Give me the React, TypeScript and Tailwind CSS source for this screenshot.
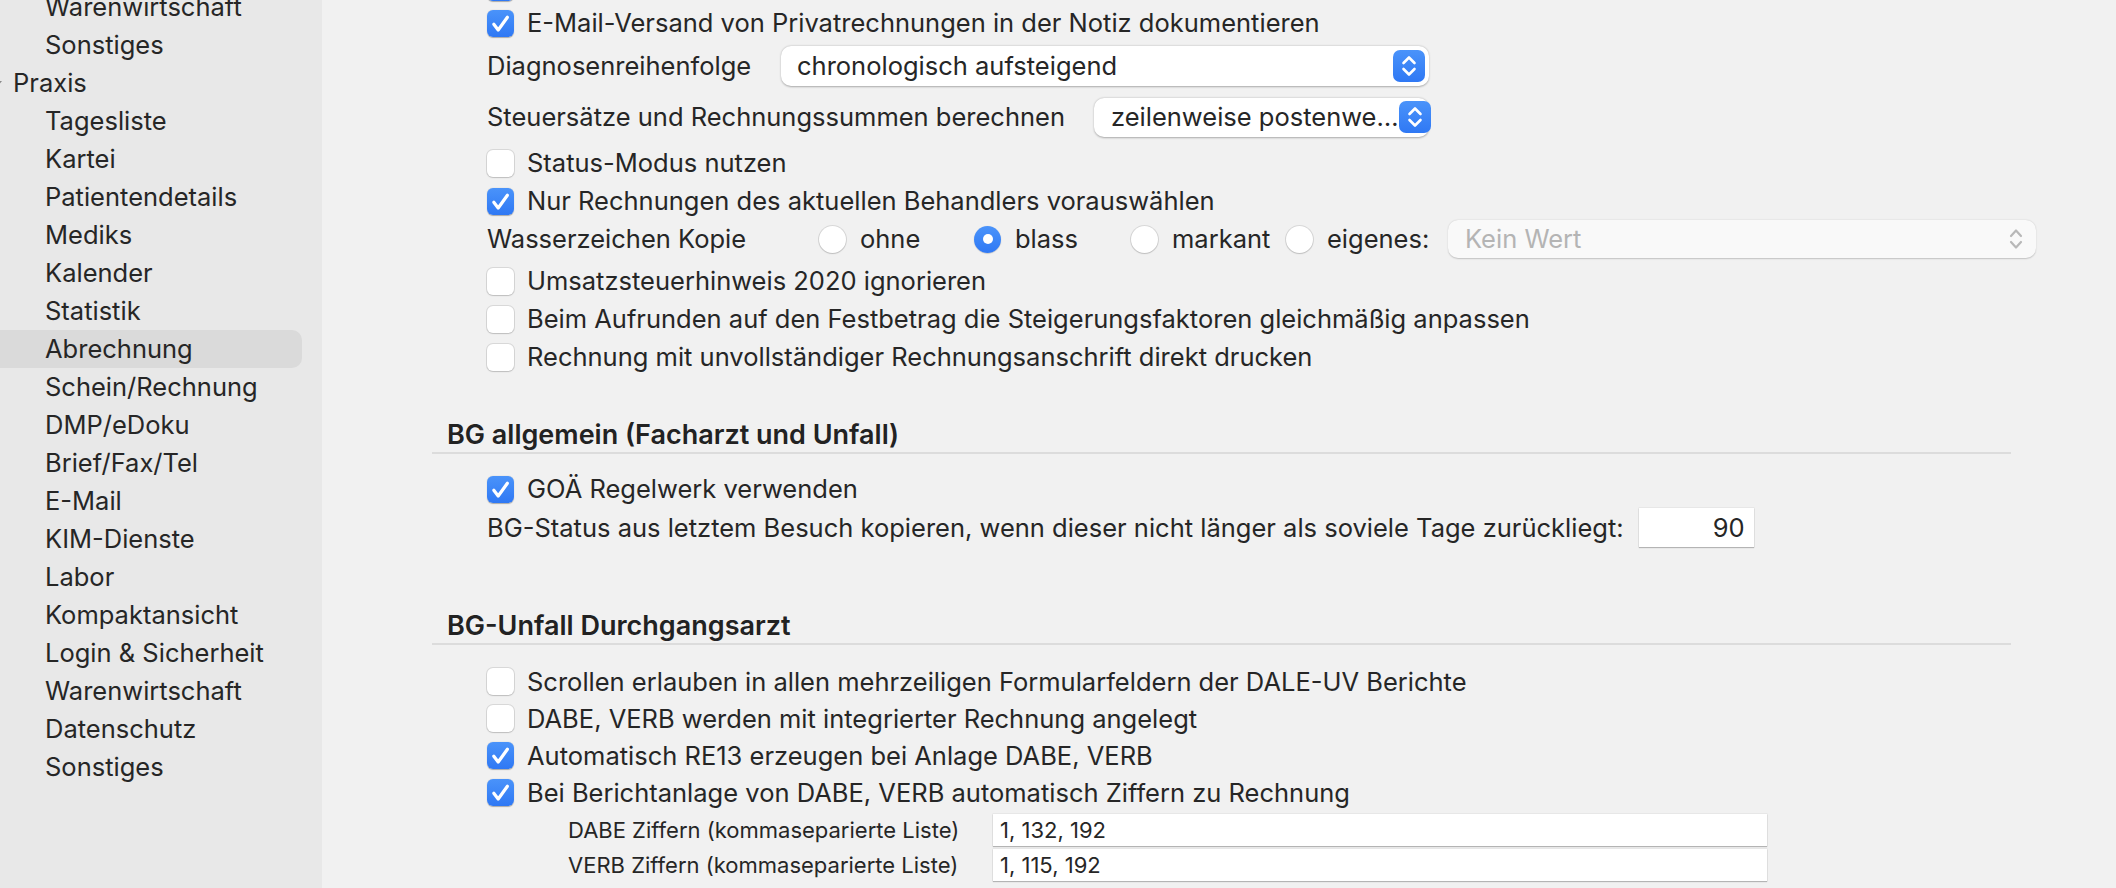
import React from "react";

function Checkbox({ checked }: { checked: boolean }) {
  if (checked) {
    return (
      <div className="w-[27px] h-[27px] rounded-[6px] bg-linear-to-b from-[#4a93fa] to-[#2f78f4] flex items-center justify-center shrink-0 shadow-[0_0.5px_1px_rgba(0,0,0,0.3)]">
        <svg width="27" height="27" viewBox="0 0 27 27">
          <path d="M6.8 14.2 L11.2 20 L20.4 7.2" fill="none" stroke="white" strokeWidth="3.2" strokeLinecap="round" strokeLinejoin="round" />
        </svg>
      </div>
    );
  }
  return <div className="w-[27px] h-[27px] rounded-[6px] bg-white shrink-0 shadow-[0_0_0_1px_rgba(0,0,0,0.1),0_1px_1.5px_rgba(0,0,0,0.12)]" />;
}

function Radio({ checked }: { checked: boolean }) {
  if (checked) {
    return (
      <div className="w-[27px] h-[27px] rounded-full bg-linear-to-b from-[#4a93fa] to-[#2f78f4] flex items-center justify-center shrink-0 shadow-[0_0.5px_1px_rgba(0,0,0,0.3)]">
        <div className="w-[10px] h-[10px] rounded-full bg-white" />
      </div>
    );
  }
  return <div className="w-[27px] h-[27px] rounded-full bg-white shrink-0 shadow-[0_0_0_1px_rgba(0,0,0,0.1),0_1px_1.5px_rgba(0,0,0,0.12)]" />;
}

function Stepper({ disabled }: { disabled?: boolean }) {
  if (disabled) {
    return (
      <div className="w-[32px] h-[32px] flex items-center justify-center shrink-0">
        <svg width="32" height="32" viewBox="0 0 32 32">
          <path d="M11 13 L16 7.5 L21 13" fill="none" stroke="#b8b8b8" strokeWidth="2.2" strokeLinecap="round" strokeLinejoin="round" />
          <path d="M11 19 L16 24.5 L21 19" fill="none" stroke="#b8b8b8" strokeWidth="2.2" strokeLinecap="round" strokeLinejoin="round" />
        </svg>
      </div>
    );
  }
  return (
    <div className="w-[32px] h-[32px] rounded-[7px] bg-linear-to-b from-[#4a93fa] to-[#2f78f4] flex items-center justify-center shrink-0">
      <svg width="32" height="32" viewBox="0 0 32 32">
        <path d="M10.5 13 L16 7.5 L21.5 13" fill="none" stroke="white" strokeWidth="2.6" strokeLinecap="round" strokeLinejoin="round" />
        <path d="M10.5 19 L16 24.5 L21.5 19" fill="none" stroke="white" strokeWidth="2.6" strokeLinecap="round" strokeLinejoin="round" />
      </svg>
    </div>
  );
}

function CheckRow({ checked, label }: { checked: boolean; label: string }) {
  return (
    <div className="flex items-center h-[38px] pl-[55px] gap-[13px] shrink-0">
      <Checkbox checked={checked} />
      <span className="whitespace-nowrap">{label}</span>
    </div>
  );
}

function CheckRow37({ checked, label }: { checked: boolean; label: string }) {
  return (
    <div className="flex items-center h-[37px] pl-[55px] gap-[13px] shrink-0">
      <Checkbox checked={checked} />
      <span className="whitespace-nowrap">{label}</span>
    </div>
  );
}

const sidebarItems: { label: string; level: number; selected?: boolean }[] = [
  { label: "Warenwirtschaft", level: 1 },
  { label: "Sonstiges", level: 1 },
  { label: "Praxis", level: 0 },
  { label: "Tagesliste", level: 1 },
  { label: "Kartei", level: 1 },
  { label: "Patientendetails", level: 1 },
  { label: "Mediks", level: 1 },
  { label: "Kalender", level: 1 },
  { label: "Statistik", level: 1 },
  { label: "Abrechnung", level: 1, selected: true },
  { label: "Schein/Rechnung", level: 1 },
  { label: "DMP/eDoku", level: 1 },
  { label: "Brief/Fax/Tel", level: 1 },
  { label: "E-Mail", level: 1 },
  { label: "KIM-Dienste", level: 1 },
  { label: "Labor", level: 1 },
  { label: "Kompaktansicht", level: 1 },
  { label: "Login & Sicherheit", level: 1 },
  { label: "Warenwirtschaft", level: 1 },
  { label: "Datenschutz", level: 1 },
  { label: "Sonstiges", level: 1 },
];

function Sidebar() {
  return (
    <div className="w-[322px] h-full bg-[#e8e8e8] shrink-0 overflow-hidden">
      <div className="flex flex-col -mt-[12px]">
        {sidebarItems.map((it, i) => {
          if (it.level === 0) {
            return (
              <div key={i} className="h-[38px] flex items-center w-[302px]">
                <svg width="10" height="10" viewBox="0 0 10 10" className="-ml-[7px] shrink-0">
                  <path d="M1 3 L9 3 L5 8 Z" fill="#8a8a8a" />
                </svg>
                <span className="ml-[10px]">{it.label}</span>
              </div>
            );
          }
          return (
            <div
              key={i}
              className={
                it.selected
                  ? "h-[38px] flex items-center w-[302px] pl-[45px] bg-[#dadada] rounded-r-[10px]"
                  : "h-[38px] flex items-center w-[302px] pl-[45px]"
              }
            >
              {it.label}
            </div>
          );
        })}
      </div>
    </div>
  );
}

function SectionHeader({ title }: { title: string }) {
  return (
    <div className="flex flex-col shrink-0">
      <div className="h-[36px] flex items-center pl-[15px] font-semibold text-[27px] text-[#222222]">{title}</div>
      <div className="h-[2px] bg-[#dcdcdc]" />
    </div>
  );
}

function Main() {
  return (
    <div className="flex-1 h-full bg-[#f1f1f1] overflow-hidden">
      <div className="ml-[110px] w-[1579px] flex flex-col -mt-[29px]">
        <div className="h-[33px] flex items-center pl-[55px] shrink-0">
          <Checkbox checked={true} />
        </div>
        <CheckRow checked={true} label="E-Mail-Versand von Privatrechnungen in der Notiz dokumentieren" />
        <div className="h-[48px] flex items-center pl-[55px] shrink-0">
          <span className="w-[294px] shrink-0 whitespace-nowrap">Diagnosenreihenfolge</span>
          <div className="w-[648px] h-[40px] shrink-0 rounded-[10px] bg-white shadow-[0_0.5px_2px_rgba(0,0,0,0.3)] flex items-center justify-between pl-[16px] pr-[4px]">
            <span className="whitespace-nowrap">chronologisch aufsteigend</span>
            <Stepper />
          </div>
        </div>
        <div className="h-[54px] flex items-center pl-[55px] shrink-0">
          <span className="w-[607px] shrink-0 whitespace-nowrap">Steuersätze und Rechnungssummen berechnen</span>
          <div className="w-[335px] h-[39px] shrink-0 rounded-[10px] bg-white shadow-[0_0.5px_2px_rgba(0,0,0,0.3)] flex items-center justify-between pl-[17px] pr-[4px]">
            <span className="whitespace-nowrap">zeilenweise postenwe…</span>
            <Stepper />
          </div>
        </div>
        <CheckRow checked={false} label="Status-Modus nutzen" />
        <CheckRow checked={true} label="Nur Rechnungen des aktuellen Behandlers vorauswählen" />
        <div className="h-[42px] shrink-0 pl-[55px]">
          <div className="h-[38px] flex items-center">
            <span className="w-[332px] shrink-0 whitespace-nowrap">Wasserzeichen Kopie</span>
            <div className="w-[155px] shrink-0 flex items-center gap-[14px]">
              <Radio checked={false} />
              <span>ohne</span>
            </div>
            <div className="w-[157px] shrink-0 flex items-center gap-[14px]">
              <Radio checked={true} />
              <span>blass</span>
            </div>
            <div className="w-[155px] shrink-0 flex items-center gap-[14px]">
              <Radio checked={false} />
              <span>markant</span>
            </div>
            <div className="w-[162px] shrink-0 flex items-center gap-[14px]">
              <Radio checked={false} />
              <span>eigenes:</span>
            </div>
            <div className="w-[588px] h-[38px] shrink-0 rounded-[10px] bg-[#f9f9f9] shadow-[0_0.5px_1.5px_rgba(0,0,0,0.2)] flex items-center justify-between pl-[17px] pr-[4px]">
              <span className="text-[#b4b4b4] whitespace-nowrap">Kein Wert</span>
              <Stepper disabled />
            </div>
          </div>
        </div>
        <CheckRow checked={false} label="Umsatzsteuerhinweis 2020 ignorieren" />
        <CheckRow checked={false} label="Beim Aufrunden auf den Festbetrag die Steigerungsfaktoren gleichmäßig anpassen" />
        <CheckRow checked={false} label="Rechnung mit unvollständiger Rechnungsanschrift direkt drucken" />

        <div className="h-[40px] shrink-0" />
        <SectionHeader title="BG allgemein (Facharzt und Unfall)" />
        <div className="h-[16px] shrink-0" />
        <CheckRow checked={true} label="GOÄ Regelwerk verwenden" />
        <div className="h-[39px] flex items-center pl-[55px] gap-[15px] shrink-0">
          <span className="whitespace-nowrap">BG-Status aus letztem Besuch kopieren, wenn dieser nicht länger als soviele Tage zurückliegt:</span>
          <div className="w-[115px] h-[39px] shrink-0 bg-white shadow-[0_1px_1px_rgba(0,0,0,0.22),0_0_0_0.5px_rgba(0,0,0,0.08)] flex items-center justify-end pr-[9px]">
            90
          </div>
        </div>

        <div className="h-[60px] shrink-0" />
        <SectionHeader title="BG-Unfall Durchgangsarzt" />
        <div className="h-[18px] shrink-0" />
        <CheckRow37 checked={false} label="Scrollen erlauben in allen mehrzeiligen Formularfeldern der DALE-UV Berichte" />
        <CheckRow37 checked={false} label="DABE, VERB werden mit integrierter Rechnung angelegt" />
        <CheckRow37 checked={true} label="Automatisch RE13 erzeugen bei Anlage DABE, VERB" />
        <CheckRow37 checked={true} label="Bei Berichtanlage von DABE, VERB automatisch Ziffern zu Rechnung" />
        <div className="flex flex-col gap-[3px] pt-[3px] pl-[136px] text-[22px]">
          <div className="h-[32px] flex items-center">
            <span className="w-[425px] shrink-0 whitespace-nowrap">DABE Ziffern (kommaseparierte Liste)</span>
            <div className="w-[774px] h-[32px] shrink-0 bg-white shadow-[0_1px_1px_rgba(0,0,0,0.22),0_0_0_0.5px_rgba(0,0,0,0.08)] flex items-center pl-[7px]">
              1, 132, 192
            </div>
          </div>
          <div className="h-[32px] flex items-center">
            <span className="w-[425px] shrink-0 whitespace-nowrap">VERB Ziffern (kommaseparierte Liste)</span>
            <div className="w-[774px] h-[32px] shrink-0 bg-white shadow-[0_1px_1px_rgba(0,0,0,0.22),0_0_0_0.5px_rgba(0,0,0,0.08)] flex items-center pl-[7px]">
              1, 115, 192
            </div>
          </div>
        </div>
      </div>
    </div>
  );
}

export default function App() {
  return (
    <div className="w-[2116px] h-[888px] overflow-hidden flex font-['Inter',sans-serif] text-[25.5px] text-[#262626] leading-none">
      <Sidebar />
      <Main />
    </div>
  );
}
